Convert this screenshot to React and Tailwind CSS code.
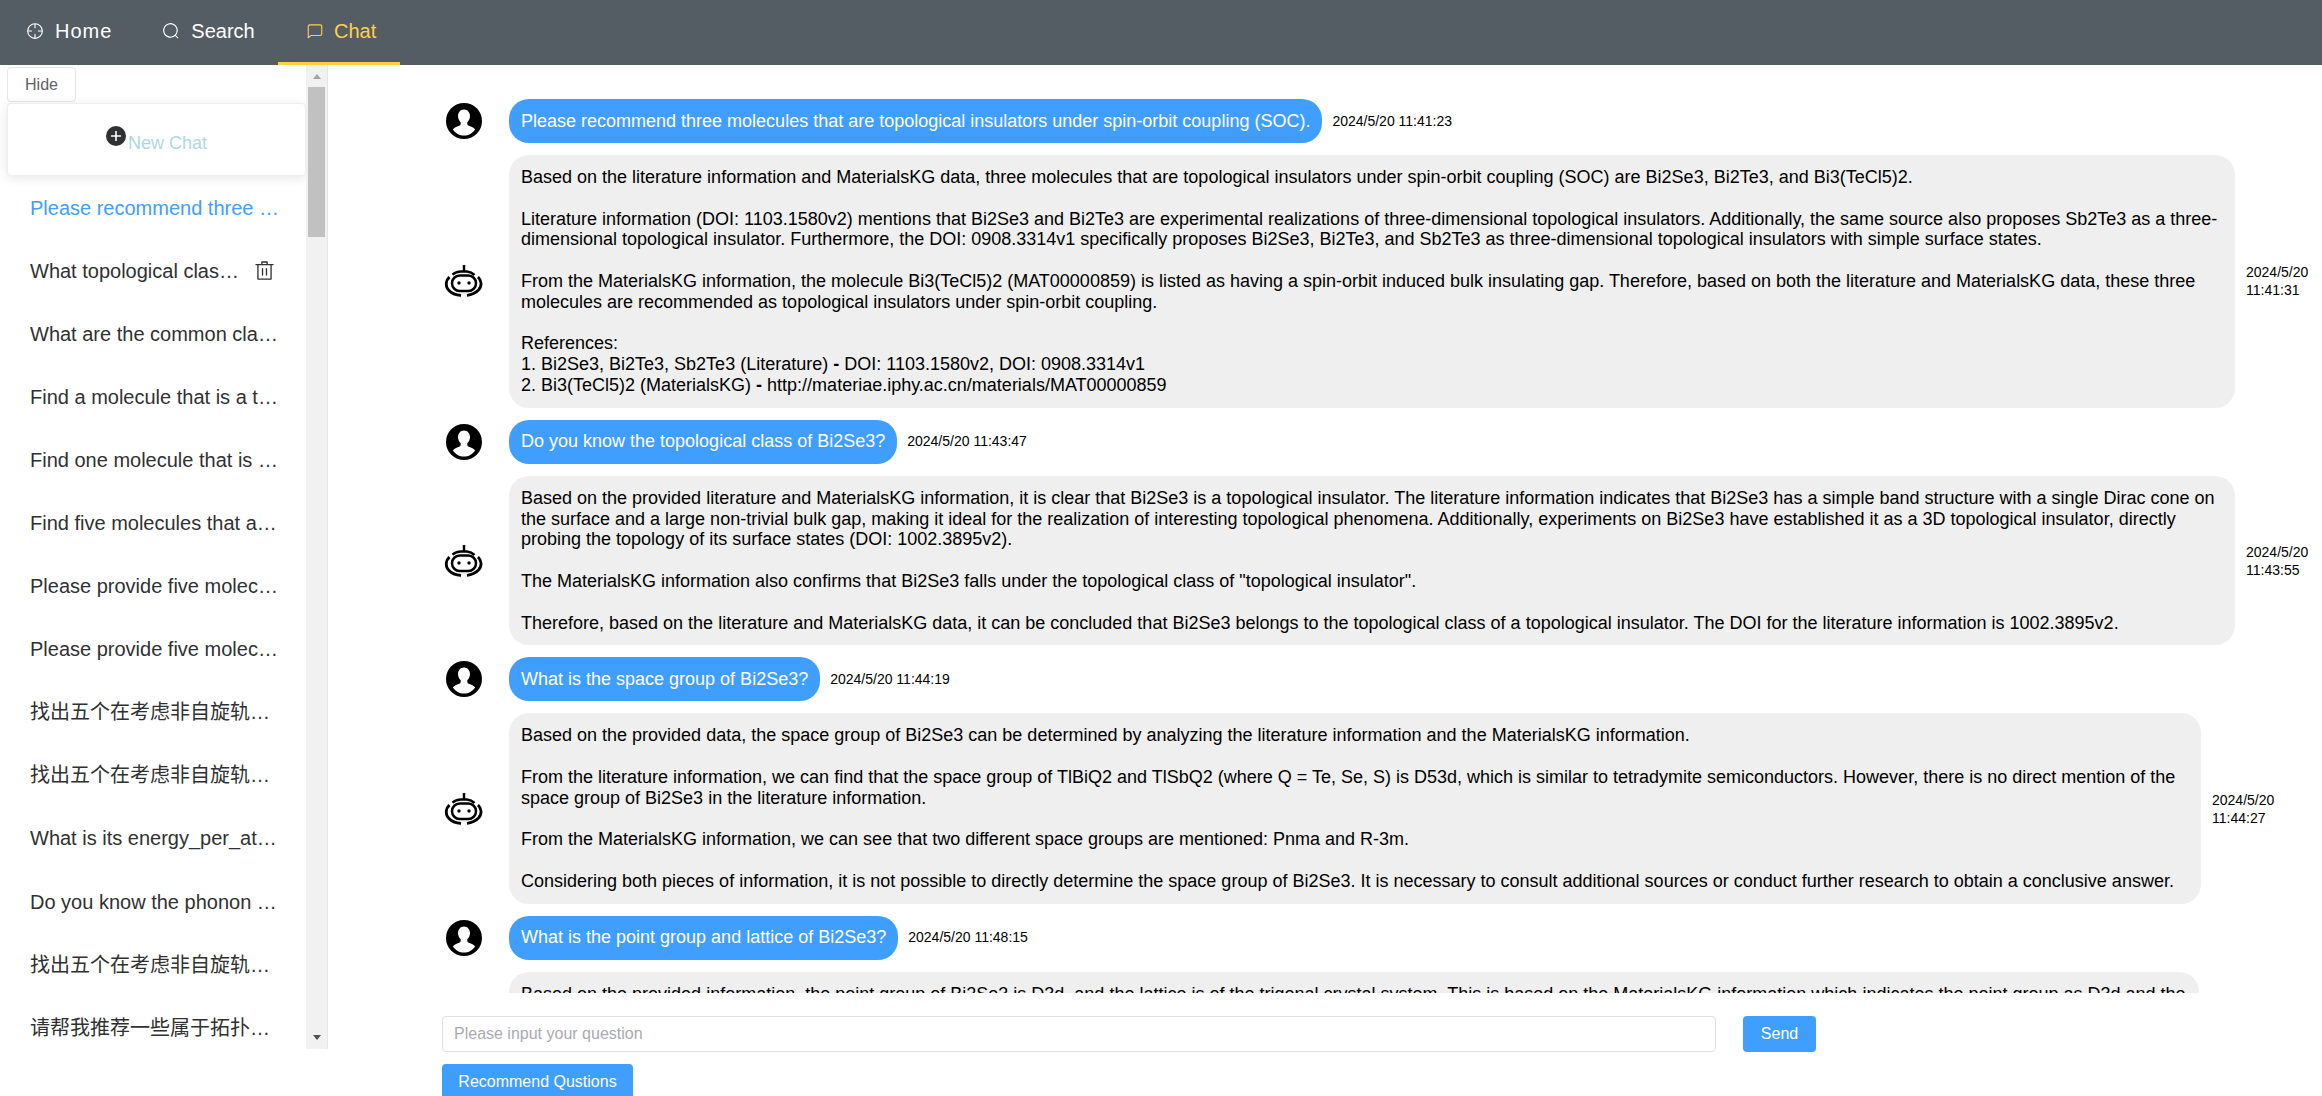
const CHATS = [
  'Please recommend three molecules',
  'What topological class does it belong to',
  'What are the common classes of matter',
  'Find a molecule that is a topological',
  'Find one molecule that is a topological',
  'Find five molecules that are insulators',
  'Please provide five molecules that are',
  'Please provide five molecules with',
  '找出五个在考虑非自旋轨道耦合',
  '找出五个在考虑非自旋轨道耦合时',
  'What is its energy_per_atom value',
  'Do you know the phonon dispersion',
  '找出五个在考虑非自旋轨道耦合的',
  '请帮我推荐一些属于拓扑绝缘体的',
]

const MESSAGES = [
  {
    question: 'Please recommend three molecules that are topological insulators under spin-orbit coupling (SOC).',
    askedAt: '2024/5/20 11:41:23',
    answeredAt: '2024/5/20 11:41:31',
    width: 'w-[1726px]',
    answer: [
      'Based on the literature information and MaterialsKG data, three molecules that are topological insulators under spin-orbit coupling (SOC) are Bi2Se3, Bi2Te3, and Bi3(TeCl5)2.',
      '',
      'Literature information (DOI: 1103.1580v2) mentions that Bi2Se3 and Bi2Te3 are experimental realizations of three-dimensional topological insulators. Additionally, the same source also proposes Sb2Te3 as a three-dimensional topological insulator. Furthermore, the DOI: 0908.3314v1 specifically proposes Bi2Se3, Bi2Te3, and Sb2Te3 as three-dimensional topological insulators with simple surface states.',
      '',
      'From the MaterialsKG information, the molecule Bi3(TeCl5)2 (MAT00000859) is listed as having a spin-orbit induced bulk insulating gap. Therefore, based on both the literature and MaterialsKG data, these three molecules are recommended as topological insulators under spin-orbit coupling.',
      '',
      'References:',
      '1. Bi2Se3, Bi2Te3, Sb2Te3 (Literature) - DOI: 1103.1580v2, DOI: 0908.3314v1',
      '2. Bi3(TeCl5)2 (MaterialsKG) - http://materiae.iphy.ac.cn/materials/MAT00000859',
    ],
  },
  {
    question: 'Do you know the topological class of Bi2Se3?',
    askedAt: '2024/5/20 11:43:47',
    answeredAt: '2024/5/20 11:43:55',
    width: 'w-[1726px]',
    answer: [
      'Based on the provided literature and MaterialsKG information, it is clear that Bi2Se3 is a topological insulator. The literature information indicates that Bi2Se3 has a simple band structure with a single Dirac cone on the surface and a large non-trivial bulk gap, making it ideal for the realization of interesting topological phenomena. Additionally, experiments on Bi2Se3 have established it as a 3D topological insulator, directly probing the topology of its surface states (DOI: 1002.3895v2).',
      '',
      'The MaterialsKG information also confirms that Bi2Se3 falls under the topological class of "topological insulator".',
      '',
      'Therefore, based on the literature and MaterialsKG data, it can be concluded that Bi2Se3 belongs to the topological class of a topological insulator. The DOI for the literature information is 1002.3895v2.',
    ],
  },
  {
    question: 'What is the space group of Bi2Se3?',
    askedAt: '2024/5/20 11:44:19',
    answeredAt: '2024/5/20 11:44:27',
    width: 'w-[1692px]',
    answer: [
      'Based on the provided data, the space group of Bi2Se3 can be determined by analyzing the literature information and the MaterialsKG information.',
      '',
      'From the literature information, we can find that the space group of TlBiQ2 and TlSbQ2 (where Q = Te, Se, S) is D53d, which is similar to tetradymite semiconductors. However, there is no direct mention of the space group of Bi2Se3 in the literature information.',
      '',
      'From the MaterialsKG information, we can see that two different space groups are mentioned: Pnma and R-3m.',
      '',
      'Considering both pieces of information, it is not possible to directly determine the space group of Bi2Se3. It is necessary to consult additional sources or conduct further research to obtain a conclusive answer.',
    ],
  },
  {
    question: 'What is the point group and lattice of Bi2Se3?',
    askedAt: '2024/5/20 11:48:15',
    answeredAt: '2024/5/20 11:48:23',
    width: 'w-[1690px]',
    answer: [
      'Based on the provided information, the point group of Bi2Se3 is D3d, and the lattice is of the trigonal crystal system. This is based on the MaterialsKG information which indicates the point group as D3d and the lattice as trigonal.',
      '',
      'The literature information does not directly mention the point group or lattice of Bi2Se3.',
      '',
      'References:',
      '1. Bi2Se3 (MaterialsKG)',
    ],
  },
]

function EpIcon({ className, children }) {
  return (
    <svg viewBox="0 0 1024 1024" fill="currentColor" className={className}>
      {children}
    </svg>
  )
}

function UserAvatar() {
  return (
    <svg viewBox="0 0 36 36" className="w-[36px] h-[36px]">
      <circle cx="18" cy="18" r="18" fill="#000" />
      <path
        d="M18 6.500c-3.600 0-6 2.900-6 6.600 0 2.600 1.100 4.800 2.700 6.100v1.600c0 1-.6 1.600-1.600 2-2.600 1-4.900 1.900-6.200 3.600C9.400 30.200 13.400 32.500 18 32.500s8.600-2.300 11.100-6.100c-1.300-1.700-3.600-2.600-6.200-3.600-1-.4-1.600-1-1.600-2v-1.600c1.600-1.300 2.700-3.500 2.700-6.100 0-3.700-2.400-6.600-6-6.600z"
        fill="#fff"
      />
    </svg>
  )
}

function RobotAvatar() {
  return (
    <svg viewBox="0 0 40 32" fill="none" stroke="#000" className="w-[40px] h-[32px]">
      <path d="M20 0v6" strokeWidth="2.500" />
      <path d="M17 6.500h6c3 .3 5.500 1.500 7.500 3.500" strokeWidth="2.500" />
      <path d="M17 6.500c-3.500 0-6.500 1.300-8.500 3.200" strokeWidth="2.500" />
      <path d="M34 12c3.600 3.400 4.400 9 .5 13-2.800 3-7 4.800-11.500 5.300" strokeWidth="2.800" />
      <path d="M17 30.300C12 30 7.700 28.500 5 25.500 1 21.500 1.600 15.500 5.500 12" strokeWidth="2.800" />
      <rect x="8" y="10.500" width="24" height="15.500" rx="7.700" strokeWidth="2.500" />
      <circle cx="15" cy="18" r="1.700" fill="#000" stroke="none" />
      <circle cx="25" cy="18" r="1.700" fill="#000" stroke="none" />
    </svg>
  )
}

function NavItem({ icon, label, active, labelClass = '' }) {
  return (
    <div
      className={`h-[65px] flex items-center border-b-[3px] ${
        active ? 'border-[#ffd04b] text-[#ffd04b] w-[122px] pl-[28px] gap-[10px]' : 'border-transparent text-white gap-[11px]'
      }`}
    >
      {icon}
      <span className={labelClass}>{label}</span>
    </div>
  )
}

function Sidebar() {
  return (
    <aside className="flex w-[328px] h-[984px] border-r border-[#e6e6e6] overflow-hidden shrink-0">
      <div className="w-[306px] shrink-0 flex flex-col overflow-hidden">
        <button className="ml-[7px] mt-[2px] w-[69px] h-[35px] shrink-0 bg-white border border-[#e4e7ed] rounded text-[16px] text-[#606266]">
          Hide
        </button>
        <div className="ml-[7px] mt-[1px] w-[299px] h-[73px] shrink-0 bg-white border border-[#ebeef5] rounded shadow-[0_2px_12px_rgba(0,0,0,0.1)] flex items-start justify-center pt-[22px] relative">
          <span className="w-[20px] h-[20px] rounded-full bg-[#303133] text-white flex items-center justify-center">
            <svg viewBox="0 0 12 12" className="w-[12px] h-[12px]" stroke="#fff" strokeWidth="1.600">
              <path d="M6 1v10M1 6h10" />
            </svg>
          </span>
          <span className="ml-[2px] mt-[4px] text-[18px] leading-[26px] text-[#add8e6]">New Chat</span>
        </div>
        <ul className="shrink-0">
          {CHATS.map((title, index) => (
            <li
              key={index}
              className={`h-[63.100px] flex items-center pl-[30px] text-[20px] ${index === 0 ? 'text-[#409eff]' : 'text-[#303133]'}`}
            >
              <span className={`truncate ${index === 1 ? 'w-[212px]' : 'w-[253px]'}`}>{title}</span>
              {index === 1 && (
                <EpIcon className="w-[21px] h-[21px] ml-[12px]">
                  <path d="M160 256H96a32 32 0 0 1 0-64h256V95.936a32 32 0 0 1 32-32h256a32 32 0 0 1 32 32V192h256a32 32 0 1 1 0 64h-64v672a32 32 0 0 1-32 32H192a32 32 0 0 1-32-32V256zm448-64v-64H416v64h192zM224 896h576V256H224v640zm192-128a32 32 0 0 1-32-32V416a32 32 0 0 1 64 0v320a32 32 0 0 1-32 32zm192 0a32 32 0 0 1-32-32V416a32 32 0 0 1 64 0v320a32 32 0 0 1-32 32z" />
                </EpIcon>
              )}
            </li>
          ))}
        </ul>
      </div>
      {/* fake scrollbar, same look as the browser's */}
      <div className="w-[21px] shrink-0 bg-[#f1f1f1] flex flex-col items-center">
        <div className="mt-[9px] w-0 h-0 border-x-[4px] border-x-transparent border-b-[5px] border-b-[#a3a3a3]" />
        <div className="mt-[8px] w-[17px] h-[150px] bg-[#c1c1c1]" />
        <div className="mt-auto mb-[9px] w-0 h-0 border-x-[4px] border-x-transparent border-t-[5px] border-t-[#505050]" />
      </div>
    </aside>
  )
}

function Line({ text }) {
  if (!text) return <br />
  const parts = text.match(/^(\d\. .*?) - (.*)$/)
  if (!parts) return <div>{text}</div>
  return (
    <div>
      {parts[1]} <b>-</b> {parts[2]}
    </div>
  )
}

function Message({ item }) {
  return (
    <div className="flex flex-col gap-[12px]">
      <div className="flex items-center">
        <div className="w-[67px] shrink-0 pl-[4px]">
          <UserAvatar />
        </div>
        <div className="h-[44px] px-[12px] flex items-center rounded-[20px] bg-[#409eff] text-white whitespace-nowrap">
          {item.question}
        </div>
        <div className="ml-[10px] text-[14px] leading-[17px] text-black whitespace-nowrap">{item.askedAt}</div>
      </div>
      <div className="flex items-center">
        <div className="w-[67px] shrink-0 pl-[2px]">
          <RobotAvatar />
        </div>
        <div className={`${item.width} shrink-0 p-[12px] rounded-[20px] bg-[#efefef] text-black`}>
          {item.answer.map((line, index) => (
            <Line key={index} text={line} />
          ))}
        </div>
        <div className="ml-[11px] w-[70px] text-[14px] leading-[18px] text-black">
          {item.answeredAt.split(' ')[0]}
          <br />
          {item.answeredAt.split(' ')[1]}
        </div>
      </div>
    </div>
  )
}

export default function App() {
  return (
    <div className="h-screen overflow-hidden flex flex-col bg-white font-['Liberation_Sans','Noto_Sans_CJK_SC',sans-serif]">
      <nav className="h-[65px] shrink-0 bg-[#545c64] flex text-[20px]">
        <div className="flex gap-[50px] pl-[26px] w-[278px]">
          <NavItem
            label="Home"
            labelClass="tracking-[1px]"
            icon={
              <EpIcon className="w-[18px] h-[18px]">
                <path d="M512 896a384 384 0 1 0 0-768 384 384 0 0 0 0 768zm0 64a448 448 0 1 1 0-896 448 448 0 0 1 0 896z" />
                <path d="M512 96a32 32 0 0 1 32 32v192a32 32 0 0 1-64 0V128a32 32 0 0 1 32-32zm0 576a32 32 0 0 1 32 32v192a32 32 0 1 1-64 0V704a32 32 0 0 1 32-32zM96 512a32 32 0 0 1 32-32h192a32 32 0 0 1 0 64H128a32 32 0 0 1-32-32zm576 0a32 32 0 0 1 32-32h192a32 32 0 1 1 0 64H704a32 32 0 0 1-32-32z" />
              </EpIcon>
            }
          />
          <NavItem
            label="Search"
            icon={
              <EpIcon className="w-[18px] h-[18px]">
                <path d="m795.904 750.72 124.992 124.928a32 32 0 0 1-45.248 45.248L750.656 795.904a416 416 0 1 1 45.248-45.248zM480 832a352 352 0 1 0 0-704 352 352 0 0 0 0 704z" />
              </EpIcon>
            }
          />
        </div>
        <NavItem
          active
          label="Chat"
          icon={
            <EpIcon className="w-[18px] h-[18px]">
              <path d="M273.536 736H800a64 64 0 0 0 64-64V256a64 64 0 0 0-64-64H224a64 64 0 0 0-64 64v570.88L273.536 736zM296 800 147.968 918.4A32 32 0 0 1 96 893.44V256a128 128 0 0 1 128-128h576a128 128 0 0 1 128 128v416a128 128 0 0 1-128 128H296z" />
            </EpIcon>
          }
        />
      </nav>
      <div className="flex flex-1 min-h-0">
        <Sidebar />
        <main className="flex-1 min-w-0 pl-[114px] flex flex-col">
          <div className="h-[928px] shrink-0 overflow-hidden pt-[34px] flex flex-col gap-[12px] text-[18px] leading-[20.800px]">
            {MESSAGES.map((item) => (
              <Message key={item.askedAt} item={item} />
            ))}
          </div>
          <div className="mt-[23px] flex gap-[27px]">
            <input
              placeholder="Please input your question"
              className="w-[1274px] h-[36px] px-[11px] bg-white border border-[#dcdfe6] rounded text-[16px] outline-none placeholder:text-[#a8abb2]"
            />
            <button className="w-[73px] h-[36px] bg-[#409eff] text-white text-[16px] rounded">Send</button>
          </div>
          <button className="mt-[12px] w-[191px] h-[36px] shrink-0 bg-[#409eff] text-white text-[16px] rounded">
            Recommend Qustions
          </button>
        </main>
      </div>
    </div>
  )
}
